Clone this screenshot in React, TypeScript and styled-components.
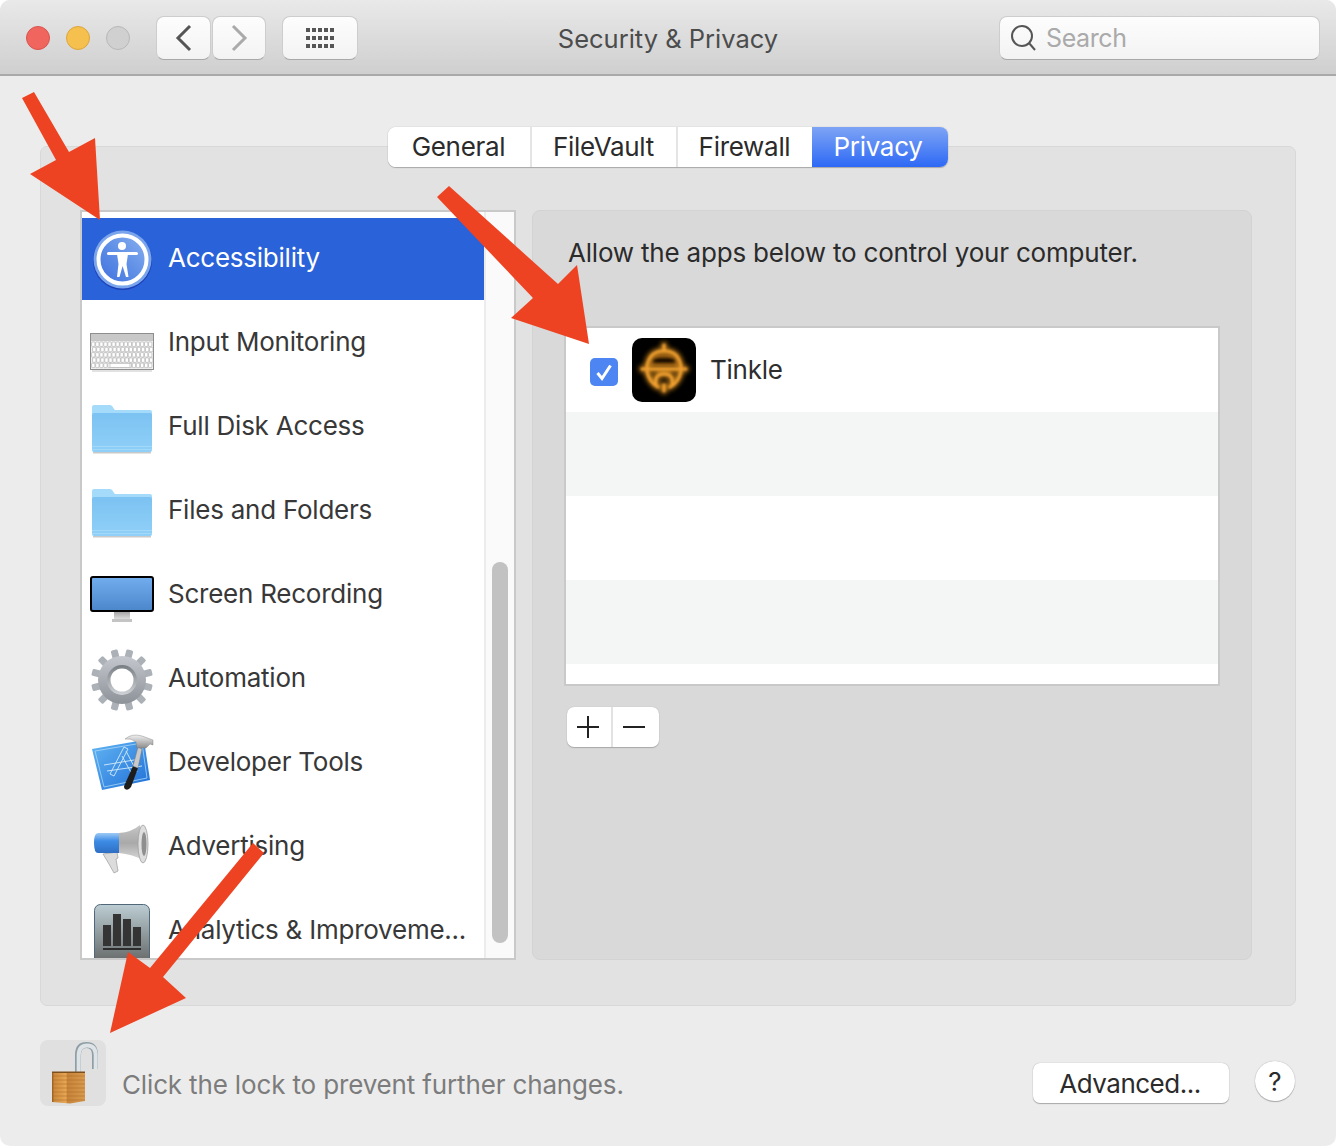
import React from "react";
import styled, { createGlobalStyle } from "styled-components";

const Global = createGlobalStyle`
  html, body { margin: 0; padding: 0; background: #fff; }
  * { box-sizing: border-box; }
  body { font-family: Inter, "Open Sans", "Liberation Sans", sans-serif; }
`;

const Window = styled.div`
  position: relative;
  width: 1336px;
  height: 1146px;
  background: #ececec;
  border-radius: 10px;
  overflow: hidden;
`;

const TitleBar = styled.header`
  display: grid;
  grid-template-columns: 1fr auto 1fr;
  align-items: center;
  height: 76px;
  padding: 2px 16px 0;
  background: linear-gradient(#e9e9e9, #cfcfcf);
  border-bottom: 2px solid #a9a9a9;
`;

const LeftTools = styled.div`
  display: flex;
  align-items: center;
  padding-left: 10px;
`;

const Lights = styled.div`
  display: flex;
  gap: 16px;
  margin-right: 26px;
`;

const Light = styled.span<{ $fill: string; $edge: string }>`
  width: 24px;
  height: 24px;
  border-radius: 50%;
  background: ${(p) => p.$fill};
  border: 1px solid ${(p) => p.$edge};
`;

const ToolButton = styled.div<{ $w: number; $mr?: number }>`
  display: flex;
  align-items: center;
  justify-content: center;
  width: ${(p) => p.$w}px;
  height: 44px;
  margin-right: ${(p) => p.$mr ?? 0}px;
  border-radius: 8px;
  background: linear-gradient(#fdfdfd, #f3f3f3);
  border: 1px solid #cdcdcd;
  border-bottom-color: #a8a8a8;
`;

const Title = styled.h1`
  margin: 0;
  font-size: 25.5px;
  font-weight: 400;
  color: #4c4c4c;
`;

const SearchBox = styled.div`
  justify-self: end;
  display: flex;
  align-items: center;
  gap: 10px;
  width: 321px;
  height: 44px;
  padding-left: 10px;
  border-radius: 8px;
  background: linear-gradient(#fdfdfd, #f3f3f3);
  border: 1px solid #cdcdcd;
  border-bottom-color: #a8a8a8;
  font-size: 25px;
  letter-spacing: -0.4px;
  color: #aaaaaa;
`;

const Main = styled.main`
  padding: 70px 40px 0;
`;

const GroupBox = styled.section`
  display: flex;
  flex-direction: column;
  height: 860px;
  padding: 0 43px 45px 39px;
  background: #e2e2e2;
  border: 1px solid #d8d8d8;
  border-radius: 7px;
`;

const Tabs = styled.nav`
  display: flex;
  align-self: center;
  margin: -20px -4px 43px 0;
  height: 40px;
  border-radius: 8px;
  background: #fff;
  box-shadow: 0 1px 1px #a8a8a8, 0 0 1px #999;
  overflow: hidden;
`;

const Tab = styled.div<{ $w: number; $active?: boolean }>`
  display: flex;
  align-items: center;
  justify-content: center;
  width: ${(p) => p.$w}px;
  padding: 0 ${(p) => (p.$active ? 4 : 1)}px 2px 0;
  font-size: 26px;
  letter-spacing: -0.3px;
  color: ${(p) => (p.$active ? "#fff" : "#2b2b2b")};
  background: ${(p) => (p.$active ? "linear-gradient(#7ea4f5, #2d69f5)" : "#fff")};
  border-right: ${(p) => (p.$active ? "none" : "2px solid #e4e4e4")};
  &:nth-child(3) { border-right: none; }
`;

const Columns = styled.div`
  display: grid;
  grid-template-columns: 436px 720px;
  gap: 16px;
  flex: 1;
  min-height: 0;
`;

const ListFrame = styled.div`
  display: flex;
  background: #fff;
  border: 2px solid #c9c9c9;
  overflow: hidden;
`;

const Rows = styled.ul`
  display: flex;
  flex-direction: column;
  gap: 2px;
  width: 402px;
  margin: 0;
  padding: 6px 0 0;
  list-style: none;
  overflow: hidden;
`;

const Row = styled.li<{ $selected?: boolean }>`
  flex: 0 0 82px;
  display: flex;
  align-items: center;
  gap: 14px;
  padding: 0 0 2px 8px;
  font-size: 26px;
  letter-spacing: -0.24px;
  color: ${(p) => (p.$selected ? "#fff" : "#383838")};
  background: ${(p) => (p.$selected ? "#2962d9" : "transparent")};
  white-space: nowrap;
  svg { flex: 0 0 64px; overflow: visible; }
`;

const RowLabel = styled.span`
  margin-top: -1px;
`;

const ScrollTrack = styled.div`
  display: flex;
  align-items: flex-end;
  width: 30px;
  padding: 0 0 15px 6px;
  background: #fafafa;
  border-left: 2px solid #ececec;
`;

const ScrollThumb = styled.div`
  width: 16px;
  height: 381px;
  border-radius: 8px;
  background: #c2c2c2;
`;

const DetailPanel = styled.div`
  padding: 27px 31px 0;
  background: #d9d9d9;
  border: 1px solid #d3d3d3;
  border-radius: 8px;
`;

const Lead = styled.p`
  margin: 0 0 58px 4px;
  font-size: 26px;
  line-height: 30px;
  letter-spacing: -0.2px;
  color: #2b2b2b;
  white-space: nowrap;
`;

const AppTable = styled.div`
  width: 656px;
  height: 360px;
  background: #fff;
  border: 2px solid #c9c9c9;
`;

const AppRow = styled.div<{ $alt?: boolean }>`
  display: flex;
  align-items: center;
  height: 84px;
  padding-left: 24px;
  background: ${(p) => (p.$alt ? "#f4f5f5" : "#fff")};
  font-size: 26px;
  letter-spacing: -0.24px;
  color: #2e2e2e;
`;

const AppName = styled.span`
  margin-top: -2px;
`;

const Check = styled.span`
  display: flex;
  align-items: center;
  justify-content: center;
  width: 28px;
  height: 28px;
  margin: 3px 14px 0 0;
  border-radius: 5px;
  background: #4d85f2;
`;

const AppIcon = styled.span`
  display: block;
  width: 64px;
  height: 64px;
  margin-right: 14px;
  border-radius: 10px;
  background: #000;
  overflow: hidden;
`;

const AddRemove = styled.div`
  display: flex;
  width: 92px;
  height: 40px;
  margin: 21px 0 0 3px;
  border-radius: 7px;
  background: #fff;
  box-shadow: 0 1px 1px #a8a8a8, 0 0 1px #aaa;
`;

const AddRemoveCell = styled.div`
  flex: 1;
  display: flex;
  align-items: center;
  justify-content: center;
  padding-right: 2px;
  & + & { border-left: 2px solid #e2e2e2; padding-right: 4px; }
`;

const Footer = styled.footer`
  display: flex;
  align-items: flex-end;
  height: 66px;
  margin-top: 34px;
`;

const LockTile = styled.div`
  width: 66px;
  height: 66px;
  border-radius: 8px;
  background: #e0e0e0;
  svg { display: block; }
`;

const LockText = styled.span`
  margin: 0 0 1px 16px;
  font-size: 26px;
  line-height: 40px;
  letter-spacing: -0.15px;
  color: #7c7c7c;
`;

const PushButton = styled.div`
  display: flex;
  align-items: center;
  justify-content: center;
  width: 196px;
  height: 40px;
  margin: 0 0 3px auto;
  padding-right: 2px;
  border-radius: 7px;
  background: #fff;
  box-shadow: 0 1px 1px #a8a8a8, 0 0 1px #999;
  font-size: 26px;
  letter-spacing: -0.5px;
  color: #2b2b2b;
`;

const HelpButton = styled.div`
  display: flex;
  align-items: center;
  justify-content: center;
  width: 40px;
  height: 40px;
  margin: 0 1px 5px 26px;
  border-radius: 50%;
  background: #fff;
  box-shadow: 0 1px 1px #a8a8a8, 0 0 1px #999;
  font-size: 26px;
  color: #2b2b2b;
`;

const ArrowLayer = styled.svg`
  position: absolute;
  inset: 0;
  pointer-events: none;
`;

const AccessibilityIcon = () => (
  <svg width="64" height="64" viewBox="0 0 64 64">
    <defs>
      <linearGradient id="acc" x1="0" y1="1" x2="1" y2="0">
        <stop offset="0" stopColor="#3f6fde" />
        <stop offset="0.5" stopColor="#5f8fe6" />
        <stop offset="1" stopColor="#8ab0ef" />
      </linearGradient>
    </defs>
    <circle cx="32.5" cy="34.5" r="29.5" fill="#1c3fb8" />
    <circle cx="32.5" cy="33.5" r="29" fill="#7aa5ec" />
    <circle cx="32.5" cy="33.5" r="24" fill="url(#acc)" stroke="#fff" strokeWidth="4" />
    <circle cx="32" cy="20" r="4" fill="#fff" />
    <path d="M18.5 27.5 L46.5 27.5" stroke="#fff" strokeWidth="3" strokeLinecap="round" />
    <path d="M27 28 H38 L36.5 38 L38.5 51 H36 L32.6 40 L29.5 51 H27 L28.5 38 Z" fill="#fff" />
  </svg>
);

const keyRows = [0, 1, 2, 3, 4];
const KeyboardIcon = () => (
  <svg width="64" height="64" viewBox="0 0 64 64">
    <rect x="0.5" y="23.5" width="63" height="36" fill="#f0f0f0" stroke="#8e8e8e" />
    <rect x="1" y="24" width="62" height="7" fill="#c8c8c8" />
    <rect x="2" y="60" width="60" height="2" fill="#e2e2e2" />
    {keyRows.map((r) =>
      Array.from({ length: 15 }, (_, i) => (
        <rect key={`${r}-${i}`} x={1.6 + i * 4.07 + (r % 2)} y={32 + r * 5.3} width="3.3" height="4.4" rx="0.6" fill="#fff" stroke="#9a9a9a" strokeWidth="0.5" />
      ))
    )}
    <rect x="20" y="53.2" width="20" height="4.4" fill="#fff" stroke="#9a9a9a" strokeWidth="0.5" />
  </svg>
);

const FolderIcon = ({ id }: { id: string }) => (
  <svg width="64" height="64" viewBox="0 0 64 64">
    <defs>
      <linearGradient id={id} x1="0" y1="0" x2="0" y2="1">
        <stop offset="0" stopColor="#7cc2f2" />
        <stop offset="1" stopColor="#8fd0f8" />
      </linearGradient>
    </defs>
    <path d="M2 13 Q2 11 4 11 H20 Q22 11 24 15 L25 16 H60 Q62 16 62 18 V30 H2 Z" fill="#a4dbfb" />
    <rect x="2" y="19" width="60" height="39" rx="2" fill={`url(#${id})`} />
    <rect x="2" y="52" width="60" height="1" fill="#a3d9f8" />
    <rect x="2" y="55" width="60" height="1" fill="#a3d9f8" />
    <rect x="3" y="58" width="58" height="1.5" fill="#c9c9c9" />
  </svg>
);

const MonitorIcon = () => (
  <svg width="64" height="64" viewBox="0 0 64 64">
    <defs>
      <linearGradient id="scr" x1="0" y1="0" x2="0" y2="1">
        <stop offset="0" stopColor="#72aeee" />
        <stop offset="1" stopColor="#4b86cb" />
      </linearGradient>
      <linearGradient id="std" x1="0" y1="0" x2="0" y2="1">
        <stop offset="0" stopColor="#a5a5a5" />
        <stop offset="1" stopColor="#dcdcdc" />
      </linearGradient>
    </defs>
    <rect x="1" y="15" width="62" height="34" rx="2" fill="url(#scr)" stroke="#000" strokeWidth="2" />
    <rect x="24" y="50" width="16" height="7" fill="url(#std)" />
    <rect x="22" y="57" width="20" height="3" fill="#c4c4c4" />
  </svg>
);

const teeth = Array.from({ length: 12 }, (_, i) => i * 30);
const GearIcon = () => (
  <svg width="64" height="64" viewBox="0 0 64 64">
    <defs>
      <linearGradient id="gear" x1="0" y1="0" x2="0" y2="1">
        <stop offset="0" stopColor="#c4c8ce" />
        <stop offset="1" stopColor="#8d9298" />
      </linearGradient>
      <linearGradient id="gearIn" x1="0" y1="0" x2="0" y2="1">
        <stop offset="0" stopColor="#777d83" />
        <stop offset="1" stopColor="#d0d4d8" />
      </linearGradient>
    </defs>
    <g transform="translate(0 2)">
      <g fill="#acb1b7">
        {teeth.map((a) => (
          <rect key={a} x="28.5" y="1" width="7" height="14" rx="1.5" transform={`rotate(${a + 15} 32 32)`} />
        ))}
      </g>
      <circle cx="32" cy="32" r="24" fill="url(#gear)" />
      <circle cx="32" cy="32" r="15" fill="url(#gearIn)" />
      <circle cx="32" cy="32" r="11.5" fill="#fff" />
    </g>
  </svg>
);

const XcodeIcon = () => (
  <svg width="64" height="64" viewBox="0 0 64 64">
    <defs>
      <linearGradient id="xc" x1="0" y1="0" x2="1" y2="1">
        <stop offset="0" stopColor="#63b5f2" />
        <stop offset="1" stopColor="#1f6fd8" />
      </linearGradient>
      <linearGradient id="hm" x1="0" y1="0" x2="0" y2="1">
        <stop offset="0" stopColor="#f0f0f0" />
        <stop offset="1" stopColor="#8d8d8d" />
      </linearGradient>
    </defs>
    <path d="M2 19 L54 10 L60 50 L12 60 Z" fill="url(#xc)" />
    <path d="M5 21 L52 13 L57 48 L14 57 Z" fill="none" stroke="#a9d8f8" strokeWidth="0.8" />
    <g fill="none" stroke="#d3ecfb" strokeWidth="0.9">
      <path d="M20 44 L34 17 L38 19 L24 46 Z" />
      <path d="M36 21 L47 42 M32 26 L43 46" />
      <path d="M14 35 L50 29 M17 41 L52 36" />
    </g>
    <path d="M43 36 L48 38 L41 57 Q38 61 35 59 Q33 57 35 54 Z" fill="#1d1d1d" />
    <path d="M48 17 L52 19 L48 38 L43 36 Z" fill="#c9c9c9" stroke="#777" strokeWidth="0.5" />
    <path d="M35 9 Q42 3 52 6 L63 10 L63 15 L60 14 L56 18 L47 18 L46 12 Q41 8 35 9 Z" fill="url(#hm)" stroke="#777" strokeWidth="0.4" />
  </svg>
);

const MegaphoneIcon = () => (
  <svg width="64" height="64" viewBox="0 0 64 64">
    <defs>
      <linearGradient id="mgb" x1="0" y1="0" x2="0" y2="1">
        <stop offset="0" stopColor="#9ecaf5" />
        <stop offset="0.4" stopColor="#3d8ce6" />
        <stop offset="1" stopColor="#2f6fc4" />
      </linearGradient>
      <linearGradient id="mgc" x1="0" y1="0" x2="0" y2="1">
        <stop offset="0" stopColor="#c6c6c6" />
        <stop offset="0.5" stopColor="#a9a9a9" />
        <stop offset="1" stopColor="#dadada" />
      </linearGradient>
    </defs>
    <path d="M13 40 L27 38 L28 44 L26 45 L28 57 L24 59 L19 50 Z" fill="#dcdcdc" stroke="#8e8e8e" strokeWidth="0.6" />
    <path d="M8 19 H30 V39 H8 Q4 39 4 29 Q4 19 8 19 Z" fill="url(#mgb)" />
    <path d="M29 19 Q42 18 50 11 L55 47 Q42 40 29 39 Z" fill="url(#mgc)" />
    <ellipse cx="53" cy="30" rx="5" ry="19" fill="#dedede" stroke="#a0a0a0" strokeWidth="0.8" />
    <ellipse cx="54" cy="30" rx="2.5" ry="12" fill="#8f8f8f" />
  </svg>
);

const barList = [
  { x: 13, y: 27 },
  { x: 23, y: 16 },
  { x: 33, y: 21 },
  { x: 43, y: 29 },
];
const AnalyticsIcon = () => (
  <svg width="64" height="64" viewBox="0 0 64 64">
    <defs>
      <linearGradient id="an" x1="0" y1="0" x2="0" y2="1">
        <stop offset="0" stopColor="#bccdd3" />
        <stop offset="0.5" stopColor="#8c9698" />
        <stop offset="1" stopColor="#5e5e5e" />
      </linearGradient>
    </defs>
    <rect x="4.5" y="6.5" width="55" height="64" rx="6" fill="url(#an)" stroke="#51677a" />
    {barList.map((b) => (
      <rect key={b.x} x={b.x} y={b.y} width="8" height={48 - b.y} fill="#343434" />
    ))}
    <rect x="13" y="50" width="38" height="2" fill="#2c2c2c" />
  </svg>
);

const shackle = "M38 33 V15 Q38 5 46.5 5 Q55 5 55 15 V29";
const LockIcon = () => (
  <svg width="66" height="66" viewBox="0 0 66 66">
    <defs>
      <linearGradient id="lk" x1="0" y1="0" x2="1" y2="0">
        <stop offset="0" stopColor="#94591f" />
        <stop offset="0.07" stopColor="#cc8a3e" />
        <stop offset="0.42" stopColor="#e6a653" />
        <stop offset="0.47" stopColor="#c6843a" />
        <stop offset="1" stopColor="#d99a4e" />
      </linearGradient>
    </defs>
    <path d={shackle} fill="none" stroke="#8f9ea6" strokeWidth="6" />
    <path d={shackle} fill="none" stroke="#dde3e6" strokeWidth="4" transform="translate(0.7 0.5)" />
    <path d="M12 32 H45 V61 L30 63.5 L12 62 Z" fill="url(#lk)" />
    {[35, 39, 43, 47, 51, 55, 59].map((y) => (
      <rect key={y} x="12" y={y} width="33" height="2" fill="#a9691f" opacity="0.25" />
    ))}
    <rect x="12" y="31.5" width="33" height="1.5" fill="#7c4f1e" />
  </svg>
);

const BellShape = ({ width, color }: { width: number; color: string }) => (
  <g fill="none" stroke={color} strokeWidth={width} strokeLinecap="round">
    <path d="M32 7 V12" />
    <path d="M15 29 Q17 13 32 13 Q47 13 49 29" />
    <path d="M10 31 H54" />
    <path d="M15 33 Q17 44 26 49 M49 33 Q47 44 38 49" />
    <path d="M24 47 Q22 36 32 36 Q42 36 40 47" />
    <path d="M32 47 V53" />
  </g>
);

const BellIcon = () => (
  <svg width="64" height="64" viewBox="0 0 64 64">
    <defs>
      <filter id="glowWide" x="-30%" y="-30%" width="160%" height="160%">
        <feGaussianBlur stdDeviation="2.6" />
      </filter>
      <filter id="glowTight" x="-30%" y="-30%" width="160%" height="160%">
        <feGaussianBlur stdDeviation="0.9" />
      </filter>
    </defs>
    <path d="M16 29 Q18 14 32 14 Q46 14 48 29 Z" fill="#7a4c10" filter="url(#glowTight)" />
    <rect x="20" y="20" width="24" height="5" rx="2.5" fill="#1a0f02" filter="url(#glowTight)" />
    <g filter="url(#glowWide)">
      <BellShape width={6} color="#c47f1c" />
    </g>
    <g filter="url(#glowTight)">
      <BellShape width={2.6} color="#f0a030" />
    </g>
  </svg>
);

const categories = [
  { label: "Accessibility", icon: <AccessibilityIcon />, selected: true },
  { label: "Input Monitoring", icon: <KeyboardIcon /> },
  { label: "Full Disk Access", icon: <FolderIcon id="fa" /> },
  { label: "Files and Folders", icon: <FolderIcon id="fb" /> },
  { label: "Screen Recording", icon: <MonitorIcon /> },
  { label: "Automation", icon: <GearIcon /> },
  { label: "Developer Tools", icon: <XcodeIcon /> },
  { label: "Advertising", icon: <MegaphoneIcon /> },
  { label: "Analytics & Improveme...", icon: <AnalyticsIcon /> },
];

const tabs = [
  { label: "General", w: 144 },
  { label: "FileVault", w: 146 },
  { label: "Firewall", w: 134 },
  { label: "Privacy", w: 136, active: true },
];

export default function App() {
  return (
    <Window>
      <Global />
      <TitleBar>
        <LeftTools>
          <Lights>
            <Light $fill="#f0665f" $edge="#d9534c" />
            <Light $fill="#f6c04f" $edge="#dba63c" />
            <Light $fill="#d0d0d0" $edge="#b8b8b8" />
          </Lights>
          <ToolButton $w={55} $mr={1}>
            <svg width="20" height="28" viewBox="0 0 20 28">
              <path d="M16 2 L4 14 L16 26" fill="none" stroke="#555" strokeWidth="3" />
            </svg>
          </ToolButton>
          <ToolButton $w={54} $mr={16}>
            <svg width="20" height="28" viewBox="0 0 20 28">
              <path d="M4 2 L16 14 L4 26" fill="none" stroke="#aaa" strokeWidth="3" />
            </svg>
          </ToolButton>
          <ToolButton $w={76}>
            <svg width="28" height="20" viewBox="0 0 28 20">
              {[0, 8, 16].map((y) =>
                [0, 6, 12, 18, 24].map((x) => <rect key={`${x}-${y}`} x={x} y={y} width="4" height="4" fill="#555" />)
              )}
            </svg>
          </ToolButton>
        </LeftTools>
        <Title>Security &amp; Privacy</Title>
        <SearchBox>
          <svg width="26" height="28" viewBox="0 0 26 28">
            <circle cx="12" cy="12" r="10" fill="none" stroke="#555" strokeWidth="2" />
            <path d="M19 19 L25 26" stroke="#555" strokeWidth="2" />
          </svg>
          Search
        </SearchBox>
      </TitleBar>
      <Main>
        <GroupBox>
          <Tabs>
            {tabs.map((t) => (
              <Tab key={t.label} $w={t.w} $active={t.active}>
                {t.label}
              </Tab>
            ))}
          </Tabs>
          <Columns>
            <ListFrame>
              <Rows>
                {categories.map((c) => (
                  <Row key={c.label} $selected={c.selected}>
                    {c.icon}
                    <RowLabel>{c.label}</RowLabel>
                  </Row>
                ))}
              </Rows>
              <ScrollTrack>
                <ScrollThumb />
              </ScrollTrack>
            </ListFrame>
            <DetailPanel>
              <Lead>Allow the apps below to control your computer.</Lead>
              <AppTable>
                <AppRow>
                  <Check>
                    <svg width="20" height="20" viewBox="0 0 20 20">
                      <path d="M3.5 11 L8 16.5 L16.5 3.5" fill="none" stroke="#fff" strokeWidth="3" />
                    </svg>
                  </Check>
                  <AppIcon>
                    <BellIcon />
                  </AppIcon>
                  <AppName>Tinkle</AppName>
                </AppRow>
                <AppRow $alt />
                <AppRow />
                <AppRow $alt />
              </AppTable>
              <AddRemove>
                <AddRemoveCell>
                  <svg width="22" height="22" viewBox="0 0 22 22">
                    <path d="M0 11 H22 M11 0 V22" stroke="#222" strokeWidth="2" />
                  </svg>
                </AddRemoveCell>
                <AddRemoveCell>
                  <svg width="22" height="22" viewBox="0 0 22 22">
                    <path d="M0 11 H22" stroke="#222" strokeWidth="2" />
                  </svg>
                </AddRemoveCell>
              </AddRemove>
            </DetailPanel>
          </Columns>
        </GroupBox>
        <Footer>
          <LockTile>
            <LockIcon />
          </LockTile>
          <LockText>Click the lock to prevent further changes.</LockText>
          <PushButton>Advanced...</PushButton>
          <HelpButton>?</HelpButton>
        </Footer>
      </Main>
      <ArrowLayer width="1336" height="1146" viewBox="0 0 1336 1146">
        <g fill="#ee4323">
          <polygon points="22,98 34,92 69,152 95,138 100,220 30,174 56,160" />
          <polygon points="437,197 449,186 558,284 577,265 589,344 511,318 533,298" />
          <polygon points="253,843 264,853 163,977 186,998 110,1033 128,952 150,968" />
        </g>
      </ArrowLayer>
    </Window>
  );
}
